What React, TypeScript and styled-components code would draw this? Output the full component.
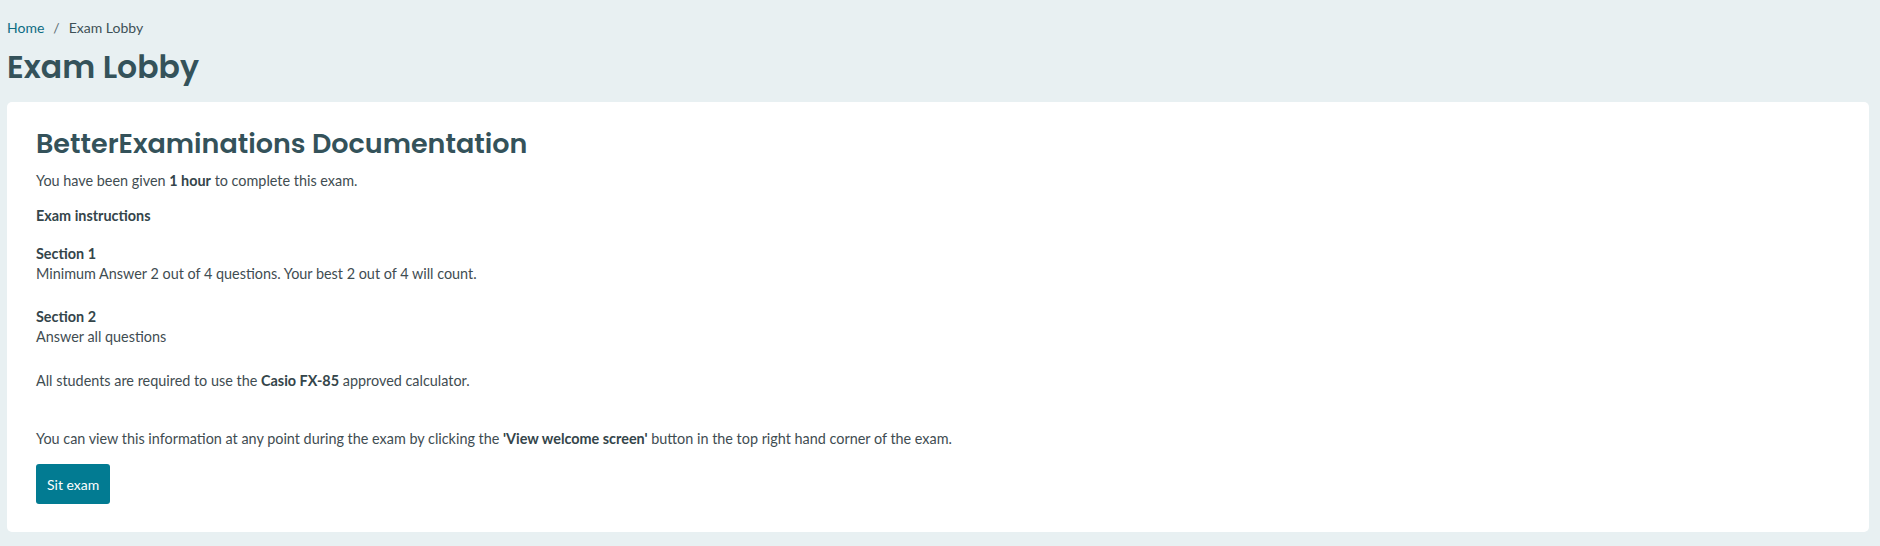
import React from 'react';
import styled, { createGlobalStyle } from 'styled-components';

const GlobalStyle = createGlobalStyle`
  html, body {
    margin: 0;
    padding: 0;
    background: #e8f0f2;
  }
  body {
    font-family: Lato, "Liberation Sans", sans-serif;
    font-size: 14px;
    color: #3f4d52;
  }
`;

const Page = styled.div`
  padding: 18px 11px 13px 7px;
`;

const Breadcrumb = styled.nav`
  display: flex;
  align-items: center;
  line-height: 20px;
  font-size: 14px;
`;

const Crumb = styled.a<{ current?: boolean }>`
  color: ${props => (props.current ? '#3e5157' : '#0d6c83')};
  text-decoration: none;
`;

const Separator = styled.span`
  color: #5a6b70;
  margin: 0 9px;
`;

const PageTitle = styled.h1`
  margin: 10px 0 16px;
  font-family: Poppins, "DejaVu Sans", sans-serif;
  font-weight: 600;
  font-size: 31.5px;
  line-height: 38px;
  color: #34525a;
`;

const Card = styled.section`
  background: #ffffff;
  border-radius: 5px;
  padding: 25px 30px 28px 29px;
`;

const CardTitle = styled.h2`
  margin: 0 0 10px;
  font-family: Poppins, "DejaVu Sans", sans-serif;
  font-weight: 600;
  font-size: 27px;
  line-height: 34px;
  color: #34525a;
`;

const Paragraph = styled.p<{ spaceAbove?: number }>`
  margin: ${props => props.spaceAbove ?? 0}px 0 0;
  font-size: 14.4px;
  line-height: 20px;
  color: #3f4d52;

  strong {
    font-weight: 700;
    color: #34454a;
  }
`;

const SitButton = styled.button`
  margin-top: 15px;
  height: 40px;
  padding: 0 11px;
  border: none;
  border-radius: 3px;
  background: #027b92;
  color: #ffffff;
  font-family: Lato, "Liberation Sans", sans-serif;
  font-size: 14px;
  cursor: pointer;
`;

export default function App() {
  return (
    <>
      <GlobalStyle />
      <Page>
        <Breadcrumb>
          <Crumb href="#">Home</Crumb>
          <Separator>/</Separator>
          <Crumb current>Exam Lobby</Crumb>
        </Breadcrumb>
        <PageTitle>Exam Lobby</PageTitle>

        <Card>
          <CardTitle>BetterExaminations Documentation</CardTitle>
          <Paragraph>
            You have been given <strong>1 hour</strong> to complete this exam.
          </Paragraph>
          <Paragraph spaceAbove={15}>
            <strong>Exam instructions</strong>
          </Paragraph>
          <Paragraph spaceAbove={18}>
            <strong>Section 1</strong>
            <br />
            Minimum Answer 2 out of 4 questions. Your best 2 out of 4 will count.
          </Paragraph>
          <Paragraph spaceAbove={23}>
            <strong>Section 2</strong>
            <br />
            Answer all questions
          </Paragraph>
          <Paragraph spaceAbove={24}>
            All students are required to use the <strong>Casio FX-85</strong> approved calculator.
          </Paragraph>
          <Paragraph spaceAbove={38}>
            You can view this information at any point during the exam by clicking the{' '}
            <strong>'View welcome screen'</strong> button in the top right hand corner of the exam.
          </Paragraph>
          <SitButton>Sit exam</SitButton>
        </Card>
      </Page>
    </>
  );
}
